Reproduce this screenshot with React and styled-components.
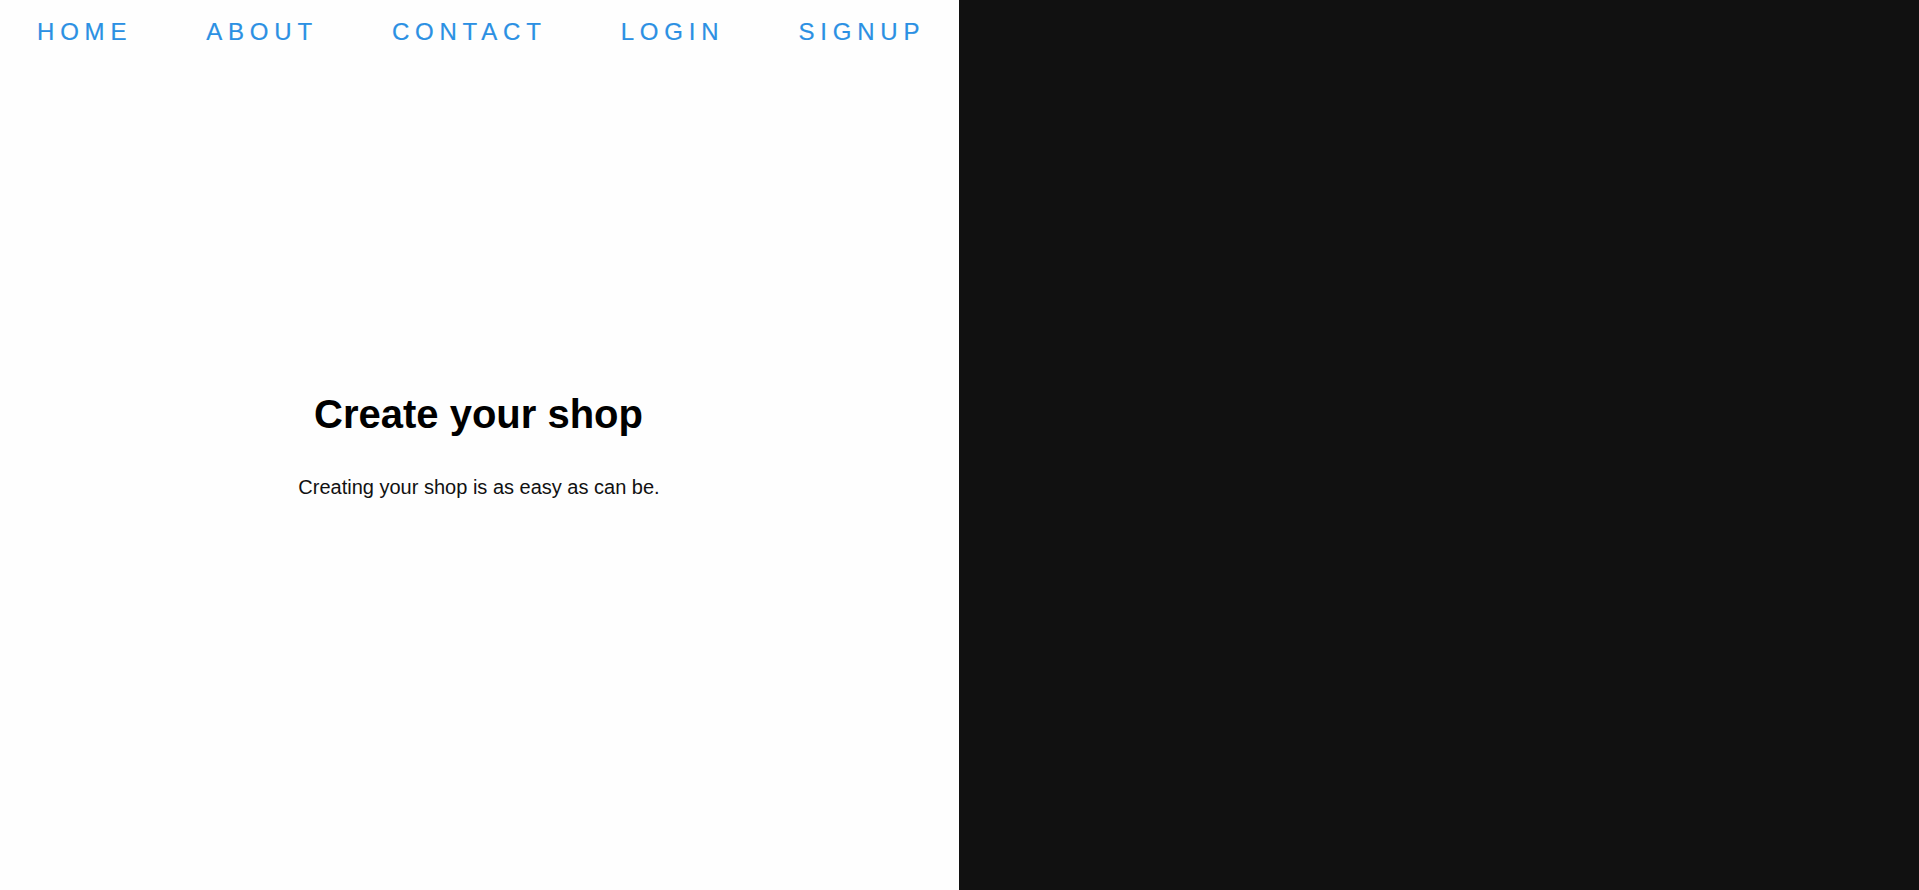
import React from "react";
import styled, { createGlobalStyle } from "styled-components";

const GlobalStyle = createGlobalStyle`
    * {
        box-sizing: border-box;
    }

    body {
        margin: 0;
        font-family: "Liberation Sans", Arial, sans-serif;
    }
`;

const links = ["Home", "About", "Contact", "Login", "Signup"];

export const Navbar = () => {
    return (
        <Nav>
            <ul className="nav-links">
                {links.map((link) => (
                    <li className="link" key={link}>
                        <a href="#">{link}</a>
                    </li>
                ))}
            </ul>
        </Nav>
    );
};

const Hero = () => {
    return (
        <HeroWrapper>
            <h1>Create your shop</h1>
            <p>Creating your shop is as easy as can be.</p>
        </HeroWrapper>
    );
};

const App = () => {
    return (
        <>
            <GlobalStyle />
            <Page>
                <LeftPanel>
                    <Navbar />
                    <Hero />
                </LeftPanel>
                <RightPanel />
            </Page>
        </>
    );
};

const Page = styled.div`
    display: flex;
    width: 100%;
    height: 100vh;
    overflow: hidden;
`;

const LeftPanel = styled.section`
    flex: 0 0 calc(50% - 0.5px);
    min-width: 0;
    background: #fefefe;
    display: grid;
    grid-template: minmax(0, 1fr) / minmax(0, 1fr);

    > * {
        grid-area: 1 / 1;
    }
`;

const RightPanel = styled.section`
    flex: 1 1 auto;
    background: #111111;
`;

const Nav = styled.nav`
    align-self: start;
    padding-top: 18px;
    z-index: 1;

    .nav-links {
        display: flex;
        margin: 0;
        padding: 0 0 0 1px;
        list-style: none;

        li {
            flex-shrink: 0;
            padding: 0 37.5px 0 36.5px;

            &:first-child {
                padding-left: 36px;
            }

            a {
                color: #2b90e3;
                font-size: 24px;
                letter-spacing: 5.8px;
                text-transform: uppercase;
                text-decoration: none;
                -webkit-text-stroke: 0.2px #2b90e3;
            }
        }
    }
`;

const HeroWrapper = styled.div`
    align-self: center;
    text-align: center;
    color: #000;

    h1 {
        margin: 0 0 0 -2px;
        font-size: 40px;
        font-weight: 700;
    }

    p {
        margin: 39px 0 0 -1px;
        font-size: 20px;
        color: #111;
    }
`;

export default App;
